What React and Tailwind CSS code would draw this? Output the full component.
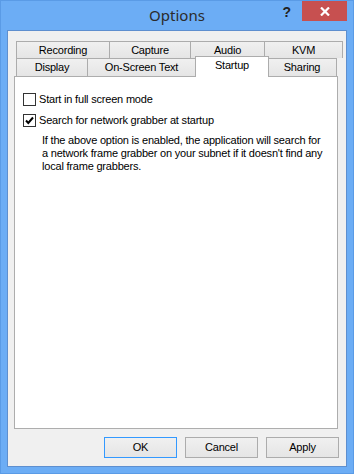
import React from "react";

const font = { fontFamily: '"Liberation Sans", Arial, sans-serif' };

function Tab({ label, w, last }) {
  return (
    <div
      className={`h-[17px] flex items-center justify-center border-t border-l border-[#acacac] bg-gradient-to-b from-[#f0f0f0] to-[#e5e5e5] text-[11px] tracking-[-0.2px] text-black leading-none ${last ? "border-r" : ""}`}
      style={{ width: w }}
    >
      {label}
    </div>
  );
}

function Checkbox({ checked }) {
  return (
    <div className="w-[13px] h-[13px] border border-[#333333] bg-white flex items-center justify-center shrink-0">
      {checked && (
        <svg width="9" height="9" viewBox="0 0 9 9">
          <path d="M1 4.5 L3.3 7 L8 1.5" fill="none" stroke="#000" strokeWidth="2" />
        </svg>
      )}
    </div>
  );
}

function Button({ children, def }) {
  return (
    <div
      className={`w-[73px] h-[21px] flex items-center justify-center border bg-gradient-to-b from-[#f0f0f0] to-[#e5e5e5] text-[11px] tracking-[-0.2px] text-black ${def ? "border-[#3399ff]" : "border-[#acacac]"}`}
    >
      {children}
    </div>
  );
}

export default function App() {
  return (
    <div className="w-[354px] h-[474px] bg-[#6cadf5] border border-[#5a9be6] flex flex-col" style={font}>
      {/* title bar */}
      <div className="h-[29px] grid grid-cols-[1fr_auto_1fr] items-start">
        <div />
        <div
          className="pt-[4px] text-[15px] text-[#2b2b2b] leading-[20px]"
          style={{ fontFamily: '"Noto Sans", "Open Sans", sans-serif' }}
        >
          Options
        </div>
        <div className="flex justify-end items-start pr-[6px]">
          <div className="mt-[3px] mr-[11px] text-[14px] font-bold text-[#222] leading-[16px]">
            ?
          </div>
          <div className="w-[45px] h-[20px] bg-[#c75050] flex items-center justify-center">
            <svg width="10" height="9" viewBox="0 0 10 9">
              <path d="M1 0.5 L9 8.5 M9 0.5 L1 8.5" stroke="#fff" strokeWidth="2.2" />
            </svg>
          </div>
        </div>
      </div>

      {/* client area */}
      <div className="ml-[6px] w-[340px] h-[437px] border border-[#5e8fcf] bg-[#f0f0f0] flex flex-col">
        {/* tabs */}
        <div className="mt-[10px] ml-[8px] flex flex-col">
          <div className="flex">
            <Tab label="Recording" w={93} />
            <Tab label="Capture" w={81} />
            <Tab label="Audio" w={74} />
            <Tab label="KVM" w={79} last />
          </div>
          <div className="flex h-[18px] items-start text-[11px] tracking-[-0.2px] leading-none">
            <div className="w-[71px] h-[18px] flex items-center justify-center border-t border-l border-[#acacac] bg-gradient-to-b from-[#f0f0f0] to-[#e5e5e5]">
              Display
            </div>
            <div className="w-[108px] h-[18px] flex items-center justify-center border-t border-l border-[#acacac] bg-gradient-to-b from-[#f0f0f0] to-[#e5e5e5]">
              On-Screen Text
            </div>
            <div className="relative z-10 -mt-[2px] w-[74px] h-[21px] pb-[3px] flex items-center justify-center border-t border-l border-r border-[#acacac] bg-white">
              Startup
            </div>
            <div className="-ml-[1px] w-[69px] h-[18px] flex items-center justify-center border-t border-r border-[#acacac] bg-gradient-to-b from-[#f0f0f0] to-[#e5e5e5]">
              Sharing
            </div>
          </div>
        </div>

        {/* panel */}
        <div className="ml-[6px] w-[324px] h-[353px] border border-[#adadad] bg-white pt-[16px] pl-[8px] text-[11px] tracking-[-0.2px] text-black">
          <div className="flex items-center gap-[3px] h-[13px]">
            <Checkbox />
            <span className="leading-none">Start in full screen mode</span>
          </div>
          <div className="flex items-center gap-[3px] h-[13px] mt-[8px]">
            <Checkbox checked />
            <span className="leading-none">Search for network grabber at startup</span>
          </div>
          <div className="ml-[19px] mt-[7px] leading-[13px] whitespace-nowrap">
            If the above option is enabled, the application will search for
            <br />
            a network frame grabber on your subnet if it doesn't find any
            <br />
            local frame grabbers.
          </div>
        </div>

        {/* buttons */}
        <div className="mt-[8px] flex justify-end gap-[8px] pr-[7px]">
          <Button def>OK</Button>
          <Button>Cancel</Button>
          <Button>Apply</Button>
        </div>
      </div>
    </div>
  );
}
